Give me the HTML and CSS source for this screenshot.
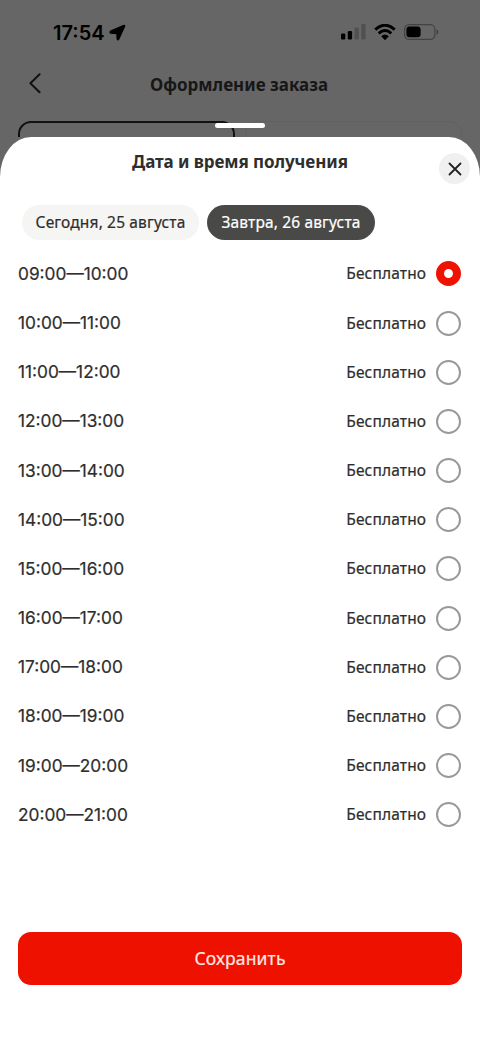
FILE: index.html
```html
<!DOCTYPE html>
<html lang="ru">
<head>
<meta charset="utf-8">
<title>Дата и время получения</title>
<link rel="stylesheet" href="styles.css">
</head>
<body>
<div class="screen">
  <div class="status">
    <span class="clock">17:54</span>
    <svg class="location" width="17" height="17" viewBox="0 0 17 17"><path d="M1.600 7.200 14.400 1.500Q16.100.9 15.500 2.600L9.700 15.200Q8.900 16.600 8.200 15.200L7.900 9.700 2 9.200Q.2 8.600 1.600 7.200Z" stroke="#000" stroke-width="1.300" stroke-linejoin="round"/></svg>
    <svg class="signal" width="25" height="16" viewBox="0 0 25 16"><rect x="0" y="9.500" width="4.300" height="6" rx="1.200"/><rect x="6.800" y="7" width="4.300" height="8.500" rx="1.200"/><g fill="#505050"><rect x="13.500" y="3.600" width="4.300" height="11.900" rx="1.200"/><rect x="20.300" y="0" width="4.300" height="15.500" rx="1.200"/></g></svg>
    <svg class="wifi" width="22" height="17" viewBox="0 0 22 17"><path d="M1.300 5.700Q11-3.200 20.700 5.700M4.700 9.300Q11 3.600 17.300 9.300" fill="none" stroke="#000" stroke-width="3"/><path d="M7.200 12.200Q11 8.900 14.800 12.200L11 16.200Z"/></svg>
    <svg class="battery" width="35" height="16" viewBox="0 0 35 16"><rect x=".6" y=".6" width="30.300" height="14.800" rx="4.600" fill="none" stroke="#424242" stroke-width="1.200"/><rect x="2.400" y="2.600" width="14.200" height="10.700" rx="3"/><path d="M32.500 5.300Q34.300 6 34.300 8T32.500 10.700Z" fill="#424242"/></svg>
  </div>
  <div class="nav">
    <svg class="back" width="12" height="21" viewBox="0 0 12 21"><path d="M10.600 1.200 1.400 10.200 10.600 19.300" fill="none" stroke="#111" stroke-width="2" stroke-linecap="round" stroke-linejoin="round"/></svg>
    <div class="nav-title">Оформление заказа</div>
  </div>
  <div class="cards"><div class="card selected"></div><div class="card"></div></div>
  <div class="handle"></div>
  <div class="sheet">
    <h1 class="title">Дата и время получения</h1>
    <button class="close" aria-label="Закрыть"><svg width="14" height="14" viewBox="0 0 14 14"><path d="M1.500 1.500 12.500 12.500M12.500 1.500 1.500 12.500" stroke="#222" stroke-width="1.800" stroke-linecap="round"/></svg></button>
    <div class="days"><button class="day">Сегодня, 25 августа</button><button class="day active">Завтра, 26 августа</button></div>
    <div class="slots">
      <div class="slot"><span class="time">09:00—10:00</span><span class="price">Бесплатно</span><i class="radio checked"></i></div>
      <div class="slot"><span class="time">10:00—11:00</span><span class="price">Бесплатно</span><i class="radio"></i></div>
      <div class="slot"><span class="time">11:00—12:00</span><span class="price">Бесплатно</span><i class="radio"></i></div>
      <div class="slot"><span class="time">12:00—13:00</span><span class="price">Бесплатно</span><i class="radio"></i></div>
      <div class="slot"><span class="time">13:00—14:00</span><span class="price">Бесплатно</span><i class="radio"></i></div>
      <div class="slot"><span class="time">14:00—15:00</span><span class="price">Бесплатно</span><i class="radio"></i></div>
      <div class="slot"><span class="time">15:00—16:00</span><span class="price">Бесплатно</span><i class="radio"></i></div>
      <div class="slot"><span class="time">16:00—17:00</span><span class="price">Бесплатно</span><i class="radio"></i></div>
      <div class="slot"><span class="time">17:00—18:00</span><span class="price">Бесплатно</span><i class="radio"></i></div>
      <div class="slot"><span class="time">18:00—19:00</span><span class="price">Бесплатно</span><i class="radio"></i></div>
      <div class="slot"><span class="time">19:00—20:00</span><span class="price">Бесплатно</span><i class="radio"></i></div>
      <div class="slot"><span class="time">20:00—21:00</span><span class="price">Бесплатно</span><i class="radio"></i></div>
    </div>
    <button class="save">Сохранить</button>
  </div>
</div>
</body>
</html>
```

FILE: styles.css
```css
* { box-sizing: border-box; }
body { margin: 0; font-family: "Noto Sans", sans-serif; color: #2e2e2e; }
button { border: 0; padding: 0; font: inherit; color: inherit; }
svg { display: block; flex: none; }
.screen { position: relative; width: 480px; height: 1041px; background: #666; overflow: hidden; display: flex; flex-direction: column; }
.status { height: 64px; flex: none; display: flex; align-items: center; padding: 0 41px 0 53px; }
.clock { font: 600 20px/24px Inter, sans-serif; color: #000; letter-spacing: 0; width: 56px; padding-top: 1px; white-space: nowrap; }
.signal { margin-left: auto; }
.wifi { margin-left: 8px; }
.battery { margin-left: 8px; }
.nav { height: 57px; flex: none; display: flex; align-items: flex-start; padding: 9px 30px 0 29px; }
.back { margin-right: 109px; }
.nav-title { font-size: 17px; line-height: 24px; font-weight: 700; letter-spacing: 0; color: #171717; white-space: nowrap; }
.cards { height: 16px; flex: none; display: flex; gap: 10px; padding-left: 18px; overflow: hidden; }
.card { width: 217px; height: 60px; flex: none; border: 1px solid #616161; border-radius: 13px; }
.card.selected { border: 2px solid #111; }
.handle { position: absolute; left: 215px; top: 123px; width: 50px; height: 5px; border-radius: 3px; background: #fff; }
.sheet { position: relative; flex: 1; background: #fff; border-radius: 31px 31px 0 0 / 40px 40px 0 0; display: flex; flex-direction: column; padding: 13px 18px 0; }
.title { margin: 0; font-size: 17px; line-height: 24px; font-weight: 700; letter-spacing: -.08px; text-align: center; white-space: nowrap; }
.close { position: absolute; right: 10px; top: 16px; width: 31px; height: 31px; border-radius: 50%; background: #f0f0f0; display: grid; place-items: center; }
.days { display: flex; gap: 8px; margin: 31px 0 9.400px 4px; }
.day { height: 35px; width: 177px; padding-bottom: 1px; border-radius: 18px; background: #f5f5f4; font-size: 15.500px; line-height: 20px; letter-spacing: .15px; -webkit-text-stroke: .2px; white-space: nowrap; }
.day.active { width: 168px; background: #494948; color: #fff; }
.slot { height: 49.170px; display: flex; align-items: center; }
.time { font: 400 17.300px/24px Inter, sans-serif; -webkit-text-stroke: .2px #2e2e2e; }
.price { margin-left: auto; margin-right: 9.800px; padding-bottom: 1px; font-size: 15.500px; line-height: 20px; letter-spacing: .15px; -webkit-text-stroke: .2px; }
.radio { width: 25px; height: 25px; margin-right: 1px; border: 2px solid #999; border-radius: 50%; }
.radio.checked { border: 8px solid #ee1300; }
.save { margin-top: 92.600px; height: 53px; flex: none; border-radius: 13px; background: #ee1100; color: #ffe7e2; font-size: 17.500px; letter-spacing: .15px; -webkit-text-stroke: .2px; padding-bottom: 1px; }
```
